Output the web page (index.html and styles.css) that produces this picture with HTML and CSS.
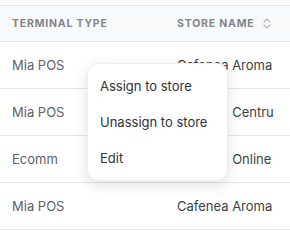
FILE: index.html
```html
<!DOCTYPE html>
<html lang="en">
<head>
    <meta charset="UTF-8">
    <meta name="viewport" content="width=device-width, initial-scale=1.0">
    <title>Terminals</title>
    <link rel="stylesheet" href="styles.css">
</head>
<body>
    <div class="table-wrap">
        <div class="row head">
            <div class="cell col-type">Terminal type</div>
            <div class="cell col-store">
                <span>Store name</span>
                <svg class="sort" width="8" height="11" viewBox="0 0 8 11">
                    <path d="M1 4 L4 1 L7 4 M1 7 L4 10 L7 7" fill="none" stroke="#b4b8be" stroke-width="1.2" stroke-linecap="round" stroke-linejoin="round"/>
                </svg>
            </div>
        </div>
        <div class="row">
            <div class="cell col-type">Mia POS</div>
            <div class="cell col-store">Cafenea Aroma</div>
        </div>
        <div class="row">
            <div class="cell col-type">Mia POS</div>
            <div class="cell col-store">Cafenea Centru</div>
        </div>
        <div class="row">
            <div class="cell col-type">Ecomm</div>
            <div class="cell col-store">Cafenea Online</div>
        </div>
        <div class="row">
            <div class="cell col-type">Mia POS</div>
            <div class="cell col-store">Cafenea Aroma</div>
        </div>

        <div class="menu">
            <div class="menu-item">Assign to store</div>
            <div class="menu-item">Unassign to store</div>
            <div class="menu-item">Edit</div>
        </div>
    </div>
</body>
</html>
```

FILE: styles.css
```css
body {
    margin: 0;
    font-family: 'Inter', sans-serif;
    background-color: white;
}
.table-wrap {
    position: relative;
    padding-top: 5px;
}
.row {
    display: flex;
    align-items: center;
    height: 46px;
    border-bottom: 1px solid #e4e6e9;
    font-size: 13px;
}
.row.head {
    height: 35px;
    border-top: 1px solid #e4e6e9;
    background-color: #f8f9fa;
    font-size: 10.5px;
    font-weight: 700;
    letter-spacing: 0.8px;
    text-transform: uppercase;
    color: #80858c;
}
.cell {
    padding: 0 12px;
}
.col-type {
    width: 141px;
    color: #5e6166;
}
.row.head .col-type,
.row.head .col-store {
    color: #80858c;
}
.col-store {
    flex: 1;
    display: flex;
    align-items: center;
    color: #3c3f44;
}
.sort {
    margin-left: 9px;
}
.menu {
    position: absolute;
    left: 87px;
    top: 63px;
    width: 141px;
    padding: 4px 0;
    background-color: white;
    border: 1px solid #eceef0;
    border-radius: 11px;
    box-shadow: 0 4px 14px rgba(0, 0, 0, 0.12);
    box-sizing: border-box;
}
.menu-item {
    height: 36px;
    line-height: 36px;
    padding-left: 12px;
    font-size: 13px;
    color: #2f3237;
}
```
